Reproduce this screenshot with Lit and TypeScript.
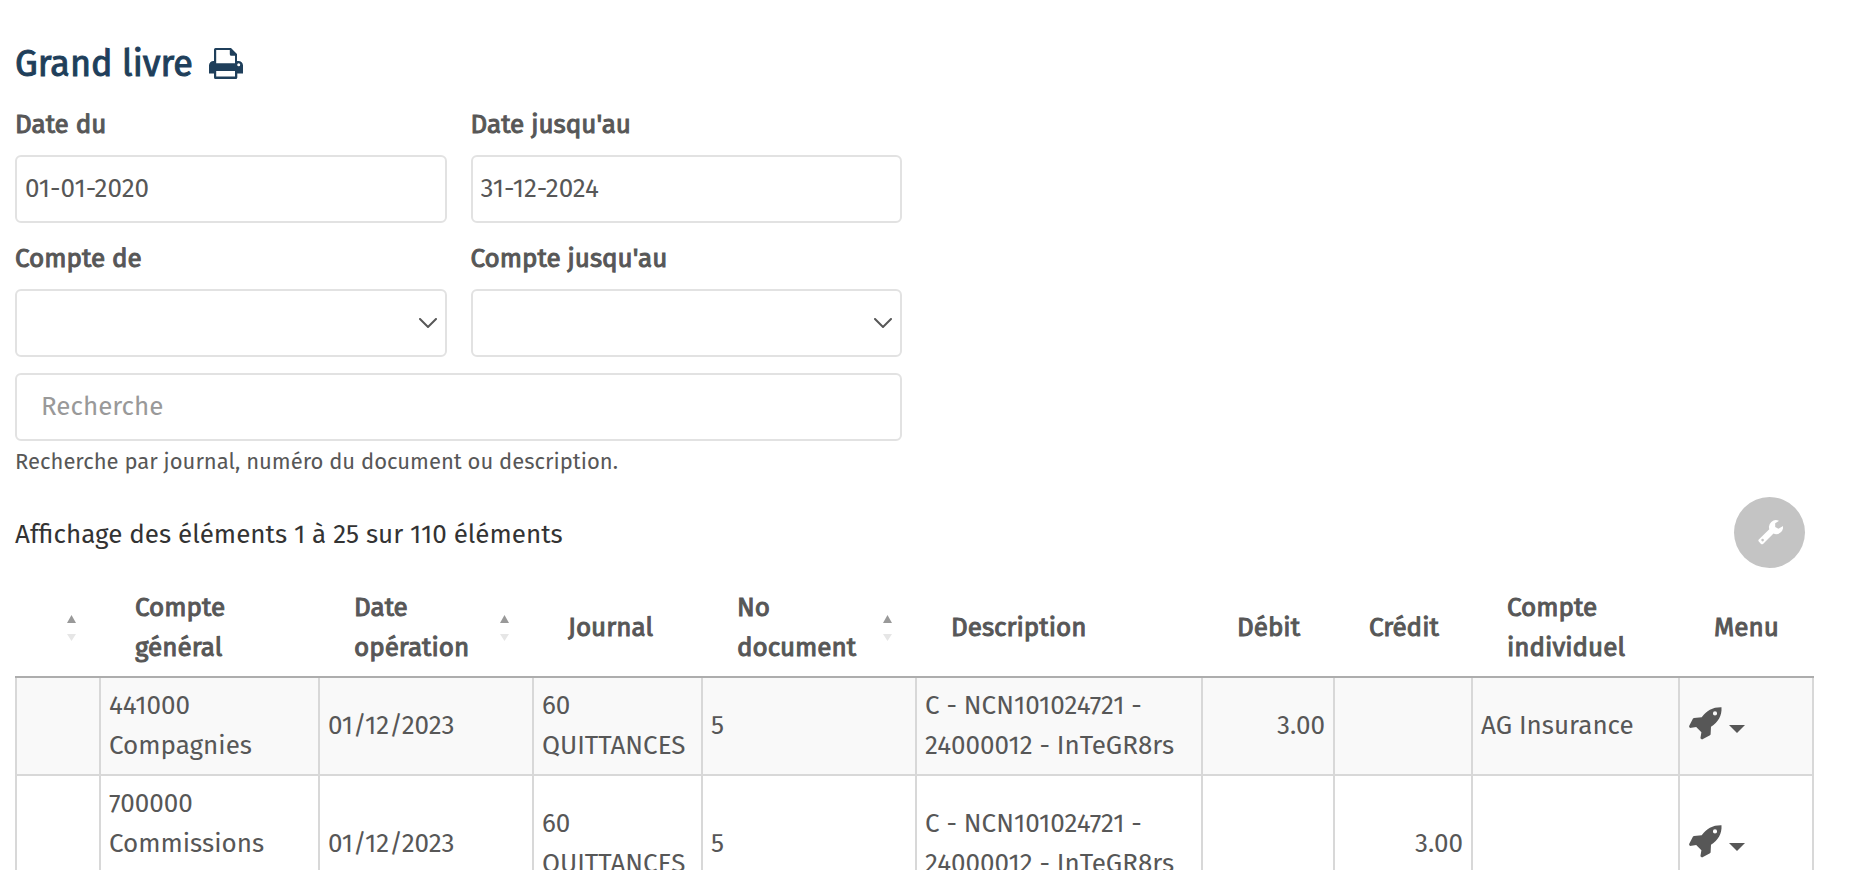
import { LitElement, html, svg, css, nothing } from "lit";
import { customElement, property, state } from "lit/decorators.js";

interface Column {
  key: string;
  label: string;
  width: number;
  sortable?: boolean;
  numeric?: boolean;
}

type Entry = Record<string, string>;

const COLUMNS: Column[] = [
  { key: "select", label: "", width: 84, sortable: true },
  { key: "account", label: "Compte\ngénéral", width: 219 },
  { key: "date", label: "Date\nopération", width: 214, sortable: true },
  { key: "journal", label: "Journal", width: 169 },
  { key: "document", label: "No\ndocument", width: 214, sortable: true },
  { key: "description", label: "Description", width: 286 },
  { key: "debit", label: "Débit", width: 132, numeric: true },
  { key: "credit", label: "Crédit", width: 138, numeric: true },
  { key: "individual", label: "Compte\nindividuel", width: 207 },
  { key: "menu", label: "Menu", width: 134 },
];

const ENTRIES: Entry[] = [
  {
    account: "441000\nCompagnies",
    date: "01/12/2023",
    journal: "60\nQUITTANCES",
    document: "5",
    description: "C - NCN101024721 -\n24000012 - InTeGR8rs",
    debit: "3.00",
    individual: "AG Insurance",
  },
  {
    account: "700000\nCommissions\n\u00a0",
    date: "01/12/2023",
    journal: "60\nQUITTANCES",
    document: "5",
    description: "C - NCN101024721 -\n24000012 - InTeGR8rs",
    credit: "3.00",
  },
];

const printerIcon = svg`
  <path fill-rule="evenodd" d="M6.500 0H22L28 6V13H29.500A4.500 4.500 0 0 1 34 17.500V25.500H28.300V29.500A1.500 1.500 0 0 1 26.800 31H6.500A1.500 1.500 0 0 1 5 29.500V25.500H0V17.500A4.500 4.500 0 0 1 4.500 13H5V1.500A1.500 1.500 0 0 1 6.500 0zM7.200 2V15.300H26V7.800H22.300A1.500 1.500 0 0 1 20.800 6.300V2zM7.200 23V28.500H26V23zM29.700 15.200a1.500 1.500 0 1 0 0 3 1.500 1.500 0 0 0 0-3z"/>`;

const rocketIcon = svg`
  <path fill-rule="evenodd" d="M32.500 0.200C24 0 17.500 3.300 12.700 10.300L5 10.900 4 11.600 0 19.300 0.900 21 7.200 20 12.400 25.300 11.400 31.300 13 32.400 21 28.300 21.600 27.500 22 19.800C29.200 15 33 9 32.500 0.200zM26 4.300a2.100 2.100 0 1 1 0 4.200 2.100 2.100 0 0 1 0-4.200z"/>`;

const wrenchIcon = svg`
  <path fill-rule="evenodd" d="M20.800 0.700A7 7 0 0 0 11.300 9.200L0.800 19.500a1.500 1.500 0 0 0 0 2L3 23.900a1.500 1.500 0 0 0 2 0L15.500 13.600A7 7 0 0 0 25 6L24.300 6.500 20.400 8.700 17.200 7V3.200L20.800 1zM4.600 18.800a1.300 1.300 0 1 1 0 2.600 1.300 1.300 0 0 1 0-2.600z"/>`;

@customElement("ledger-filters")
class LedgerFilters extends LitElement {
  static styles = css`
    :host {
      display: block;
      color: #575757;
    }
    .grid {
      display: grid;
      grid-template-columns: 1fr 1fr;
      column-gap: 24px;
      row-gap: 16px;
    }
    .field {
      display: flex;
      flex-direction: column;
      gap: 10px;
    }
    .wide {
      grid-column: 1 / -1;
      gap: 1px;
    }
    .label {
      line-height: 40px;
      -webkit-text-stroke: 1px currentColor;
    }
    .control {
      box-sizing: border-box;
      width: 100%;
      height: 68px;
      margin: 0;
      padding: 0 8px 2px;
      border: 2px solid #e2e2e2;
      border-radius: 6px;
      background: #fff;
      color: inherit;
      font: inherit;
      appearance: none;
      outline-color: #1f3f5b;
    }
    .search {
      padding: 0 24px 2px;
    }
    .search::placeholder {
      color: #999;
      opacity: 1;
    }
    .picker {
      display: grid;
      align-items: center;
    }
    .picker > * {
      grid-area: 1 / 1;
    }
    .chevron {
      justify-self: end;
      width: 18px;
      height: 10px;
      margin-right: 10px;
      fill: none;
      stroke: #575757;
      stroke-width: 2;
      stroke-linecap: round;
      pointer-events: none;
    }
    .help {
      font-size: 22px;
      line-height: 40px;
    }
  `;

  private dateField(id: string, label: string, value: string) {
    return html`<div class="field">
      <label class="label" for=${id}>${label}</label>
      <input class="control" id=${id} type="text" .value=${value} />
    </div>`;
  }

  private accountField(id: string, label: string) {
    return html`<div class="field">
      <label class="label" for=${id}>${label}</label>
      <div class="picker">
        <select class="control" id=${id}><option value=""></option></select>
        <svg class="chevron" viewBox="0 0 18 10" aria-hidden="true"><path d="M1 1l8 8 8-8" /></svg>
      </div>
    </div>`;
  }

  render() {
    return html`<form class="grid">
      ${this.dateField("from", "Date du", "01-01-2020")}
      ${this.dateField("to", "Date jusqu'au", "31-12-2024")}
      ${this.accountField("account-from", "Compte de")}
      ${this.accountField("account-to", "Compte jusqu'au")}
      <div class="field wide">
        <input class="control search" id="search" type="search" placeholder="Recherche" />
        <label class="help" for="search">Recherche par journal, numéro du document ou description.</label>
      </div>
    </form>`;
  }
}

@customElement("ledger-table")
class LedgerTable extends LitElement {
  @property({ attribute: false }) entries: Entry[] = [];

  static styles = css`
    :host {
      display: block;
      color: #575757;
    }
    .table {
      width: 100%;
      table-layout: fixed;
      border-collapse: collapse;
      line-height: 40px;
    }
    .head {
      padding: 8px 24px 8px 35px;
      border-bottom: 2px solid #adadad;
      font-weight: 400;
      text-align: left;
      -webkit-text-stroke: 1px currentColor;
    }
    .heading {
      display: flex;
      align-items: center;
      justify-content: space-between;
    }
    .text {
      white-space: pre;
    }
    .sort {
      display: flex;
      padding: 0;
      border: 0;
      background: none;
      cursor: pointer;
    }
    .arrows {
      width: 9px;
      height: 26px;
    }
    .up {
      fill: #999;
    }
    .down {
      fill: #e6e6e6;
    }
    .row:nth-child(odd) {
      background: #f9f9f9;
    }
    .cell {
      padding: 8px;
      border: 2px solid #d8d8d8;
      vertical-align: middle;
      white-space: pre;
    }
    .numeric {
      text-align: right;
    }
    .menu {
      display: flex;
      align-items: center;
      gap: 7px;
      padding: 0 0 3px 1px;
      border: 0;
      background: none;
      cursor: pointer;
    }
    .rocket {
      width: 33px;
      height: 33px;
      margin-bottom: 2px;
      fill: #575757;
    }
    .caret {
      width: 16px;
      height: 8px;
      margin-top: 8px;
      fill: #575757;
    }
  `;

  private cell(column: Column, entry: Entry) {
    if (column.key === "menu") {
      return html`<td class="cell"><button class="menu" type="button" aria-label="Menu">
        <svg class="rocket" viewBox="0 0 33 33" aria-hidden="true">${rocketIcon}</svg>
        <svg class="caret" viewBox="0 0 16 8" aria-hidden="true"><path d="M0 0h16L8 8z" /></svg>
      </button></td>`;
    }
    return html`<td class="cell ${column.numeric ? "numeric" : ""}">${entry[column.key] ?? nothing}</td>`;
  }

  render() {
    return html`<table class="table">
      <colgroup>
        ${COLUMNS.map((c) => html`<col style="width:${c.width}px" />`)}
      </colgroup>
      <thead>
        <tr>
          ${COLUMNS.map(
            (c) => html`<th class="head" scope="col">
              <div class="heading">
                <span class="text">${c.label}</span>
                ${c.sortable
                  ? html`<button class="sort" type="button" aria-label="Trier">
                      <svg class="arrows" viewBox="0 0 9 26" aria-hidden="true">
                        <path class="up" d="M4.500 0L9 8H0z" />
                        <path class="down" d="M0 19h9L4.500 26z" />
                      </svg>
                    </button>`
                  : nothing}
              </div>
            </th>`
          )}
        </tr>
      </thead>
      <tbody>
        ${this.entries.map(
          (entry) => html`<tr class="row">${COLUMNS.map((c) => this.cell(c, entry))}</tr>`
        )}
      </tbody>
    </table>`;
  }
}

@customElement("app-root")
class AppRoot extends LitElement {
  @state() private entries = ENTRIES;

  static styles = css`
    :host {
      display: block;
      box-sizing: border-box;
      height: 100vh;
      overflow: hidden;
      padding: 40px 44px 0 15px;
      background: #fff;
      color: #333;
      font-family: "Fira Sans", "Noto Sans", sans-serif;
      font-size: 26px;
      line-height: 40px;
    }
    .header {
      display: flex;
      align-items: center;
      gap: 16px;
      margin-bottom: 17px;
      color: #1f3f5b;
    }
    .title {
      margin: 0;
      font-size: 36px;
      line-height: 48px;
      font-weight: 400;
      -webkit-text-stroke: 1px currentColor;
    }
    .print,
    .settings {
      display: flex;
      align-items: center;
      justify-content: center;
      padding: 0;
      border: 0;
      background: none;
      cursor: pointer;
    }
    .print {
      padding-bottom: 2px;
    }
    .printer {
      width: 34px;
      height: 31px;
      fill: #1f3f5b;
    }
    .filters {
      width: 887px;
      max-width: 100%;
    }
    .toolbar {
      display: flex;
      align-items: center;
      justify-content: space-between;
      padding: 15px 9px 12px 0;
    }
    .summary {
      padding-top: 5px;
    }
    .settings {
      width: 71px;
      height: 71px;
      padding-left: 2px;
      border-radius: 50%;
      background: #c4c4c4;
    }
    .wrench {
      width: 25px;
      height: 25px;
      fill: #fff;
    }
  `;

  render() {
    return html`
      <header class="header">
        <h1 class="title">Grand livre</h1>
        <button class="print" type="button" aria-label="Imprimer">
          <svg class="printer" viewBox="0 0 34 31" aria-hidden="true">${printerIcon}</svg>
        </button>
      </header>
      <ledger-filters class="filters"></ledger-filters>
      <div class="toolbar">
        <span class="summary">Affichage des éléments 1 à 25 sur 110 éléments</span>
        <button class="settings" type="button" aria-label="Paramètres">
          <svg class="wrench" viewBox="0 0 25 25" aria-hidden="true">${wrenchIcon}</svg>
        </button>
      </div>
      <ledger-table .entries=${this.entries}></ledger-table>
    `;
  }
}
